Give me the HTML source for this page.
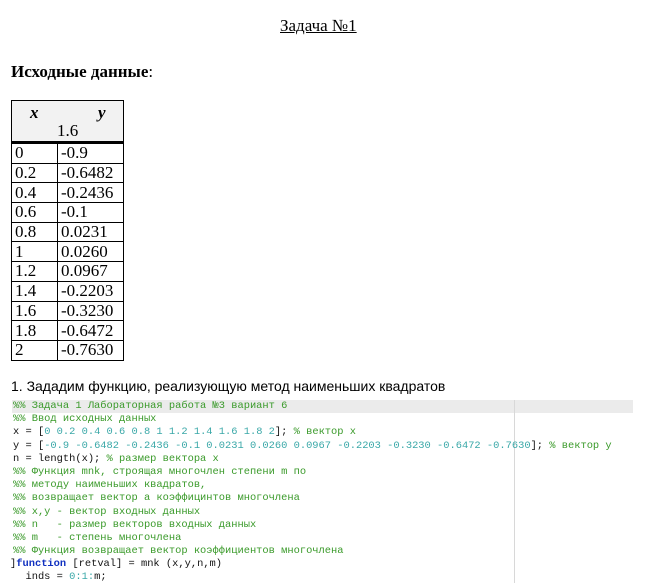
<!DOCTYPE html>
<html><head><meta charset="utf-8"><style>
body{margin:0;width:649px;height:583px;background:#fff;position:relative;overflow:hidden;font-family:"Liberation Serif","Noto Serif CJK SC",serif;color:#000}
.a{position:absolute;white-space:pre}
table{position:absolute;left:11px;top:100px;border-collapse:collapse;font-size:17px}
td{border:1px solid #000;height:18.7px;padding:0 0 0 3px;line-height:18px}
td.c1{width:42px}td.c2{width:62px}
.hd td{background:#f2f2f2;height:40px;border-bottom:3px solid #000;text-align:center;font-style:italic;font-weight:bold;vertical-align:top}
.code{position:absolute;left:12px;top:400px;width:621px;font-family:"Liberation Mono",monospace;font-size:10.4px;line-height:13.2px;color:#111}
.code div{white-space:pre;height:13.2px;padding-left:1px}
.g{color:#3a9a2a}.n{color:#3aa8a8}.k{color:#1030c0;font-weight:bold}
</style></head><body>
<div class="a" style="left:280px;top:16px;font-size:17px;text-decoration:underline">Задача №1</div>
<div class="a" style="left:11px;top:62px;font-size:17px"><b>Исходные данные</b>:</div>
<table>
<tr class="hd"><td colspan="2" style="padding:0;position:relative"><span style="position:absolute;left:18px;top:3px">x</span><span style="position:absolute;left:86px;top:3px">y</span><span style="position:absolute;left:45px;top:21px;font-style:normal;font-weight:normal">1.6</span></td></tr>
<tr><td class="c1">0</td><td class="c2">-0.9</td></tr>
<tr><td class="c1">0.2</td><td class="c2">-0.6482</td></tr>
<tr><td class="c1">0.4</td><td class="c2">-0.2436</td></tr>
<tr><td class="c1">0.6</td><td class="c2">-0.1</td></tr>
<tr><td class="c1">0.8</td><td class="c2">0.0231</td></tr>
<tr><td class="c1">1</td><td class="c2">0.0260</td></tr>
<tr><td class="c1">1.2</td><td class="c2">0.0967</td></tr>
<tr><td class="c1">1.4</td><td class="c2">-0.2203</td></tr>
<tr><td class="c1">1.6</td><td class="c2">-0.3230</td></tr>
<tr><td class="c1">1.8</td><td class="c2">-0.6472</td></tr>
<tr><td class="c1">2</td><td class="c2">-0.7630</td></tr>
</table>
<div class="a" style="left:11px;top:378px;font-family:'Liberation Sans',sans-serif;font-size:14px">1. Зададим функцию, реализующую метод наименьших квадратов</div>
<div style="position:absolute;left:12px;top:400px;width:621px;height:13px;background:#ebebeb"></div>
<div style="position:absolute;left:514px;top:400px;width:1px;height:183px;background:#d8d8d8"></div>
<div class="code">
<div class="g">%% Задача 1 Лабораторная работа №3 вариант 6</div>
<div class="g">%% Ввод исходных данных</div>
<div>x = [<span class="n">0 0.2 0.4 0.6 0.8 1 1.2 1.4 1.6 1.8 2</span>]; <span class="g">% вектор x</span></div>
<div>y = [<span class="n">-0.9 -0.6482 -0.2436 -0.1 0.0231 0.0260 0.0967 -0.2203 -0.3230 -0.6472 -0.7630</span>]; <span class="g">% вектор y</span></div>
<div>n = length(x); <span class="g">% размер вектора x</span></div>
<div class="g">%% Функция mnk, строящая многочлен степени m по</div>
<div class="g">%% методу наименьших квадратов,</div>
<div class="g">%% возвращает вектор a коэффицинтов многочлена</div>
<div class="g">%% x,y - вектор входных данных</div>
<div class="g">%% n   - размер векторов входных данных</div>
<div class="g">%% m   - степень многочлена</div>
<div class="g">%% Функция возвращает вектор коэффициентов многочлена</div>
<div style="margin-left:-3px">]<span class="k">function</span> [retval] = mnk (x,y,n,m)</div>
<div>  inds = <span class="n">0:1:</span>m;</div>
</div>
</body></html>
